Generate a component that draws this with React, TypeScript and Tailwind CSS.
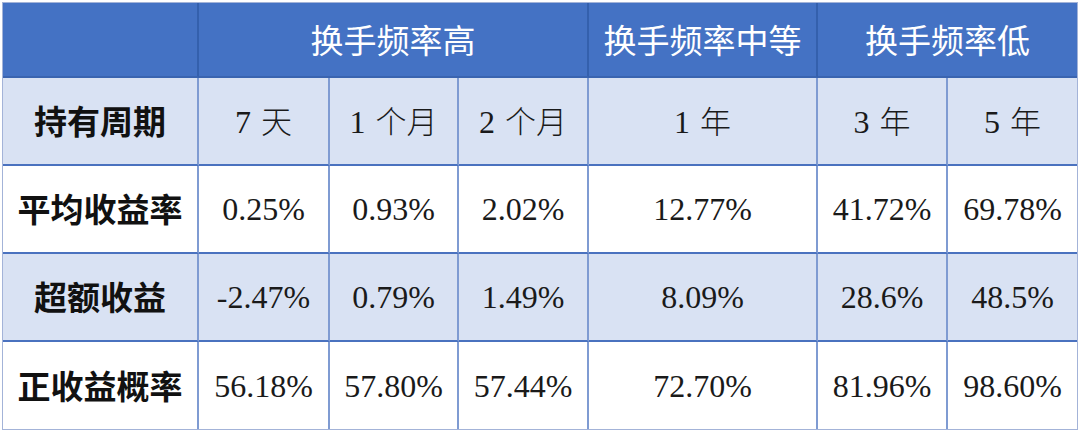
import React from "react";

type Row = { label: string; cells: string[]; light: boolean };

const rows: Row[] = [
  { label: "持有周期", cells: ["7 天", "1 个月", "2 个月", "1 年", "3 年", "5 年"], light: true },
  { label: "平均收益率", cells: ["0.25%", "0.93%", "2.02%", "12.77%", "41.72%", "69.78%"], light: false },
  { label: "超额收益", cells: ["-2.47%", "0.79%", "1.49%", "8.09%", "28.6%", "48.5%"], light: true },
  { label: "正收益概率", cells: ["56.18%", "57.80%", "57.44%", "72.70%", "81.96%", "98.60%"], light: false },
];

function Cell({ text, bg, isLast, isLastRow }: { text: string; bg: string; isLast: boolean; isLastRow: boolean }) {
  const parts = text.split(" ");
  return (
    <div
      className={`${bg} flex items-center justify-center text-[32px] text-[#1a1a1a] font-['Liberation_Serif',serif] ${isLast ? "" : "border-r-2 border-r-[#7f9bd2]"} ${isLastRow ? "" : "border-b-2 border-b-[#4a72bf]"}`}
    >
      {parts.length === 2 ? (
        <span className="flex items-baseline gap-[10px]">
          <span>{parts[0]}</span>
          <span className="font-['Noto_Sans_CJK_SC',sans-serif] font-light text-[31px]">{parts[1]}</span>
        </span>
      ) : (
        <span>{text}</span>
      )}
    </div>
  );
}

export default function App() {
  return (
    <div className="w-[1080px] h-[433px] bg-white">
      <div className="ml-[2px] mt-[2px] w-[1076px] border border-[#a3b3d8]">
        <div className="grid grid-cols-[196px_131px_129px_130px_229px_130px_129px] grid-rows-[75px_88px_88px_88px_87px]">
          {/* header */}
          <div className="bg-[#4472c4] border-r-2 border-r-[#3460ad] border-b-2 border-b-[#3a64b0]" />
          <div className="col-span-3 bg-[#4472c4] border-r-2 border-r-[#3460ad] border-b-2 border-b-[#3a64b0] flex items-center justify-center text-white text-[33px] font-['Noto_Sans_CJK_SC',sans-serif]">
            换手频率高
          </div>
          <div className="bg-[#4472c4] border-r-2 border-r-[#3460ad] border-b-2 border-b-[#3a64b0] flex items-center justify-center text-white text-[33px] font-['Noto_Sans_CJK_SC',sans-serif]">
            换手频率中等
          </div>
          <div className="col-span-2 bg-[#4472c4] border-b-2 border-b-[#3a64b0] flex items-center justify-center text-white text-[33px] font-['Noto_Sans_CJK_SC',sans-serif]">
            换手频率低
          </div>

          {rows.map((r, ri) => {
            const isLastRow = ri === rows.length - 1;
            const bg = r.light ? "bg-[#d9e2f3]" : "bg-white";
            return (
              <React.Fragment key={r.label}>
                <div
                  className={`${bg} flex items-center justify-center text-[33px] font-bold text-[#111] font-['Noto_Sans_CJK_SC',sans-serif] border-r-2 border-r-[#7f9bd2] ${isLastRow ? "" : "border-b-2 border-b-[#4a72bf]"}`}
                >
                  {r.label}
                </div>
                {r.cells.map((c, ci) => (
                  <Cell key={ci} text={c} bg={bg} isLast={ci === r.cells.length - 1} isLastRow={isLastRow} />
                ))}
              </React.Fragment>
            );
          })}
        </div>
      </div>
    </div>
  );
}
